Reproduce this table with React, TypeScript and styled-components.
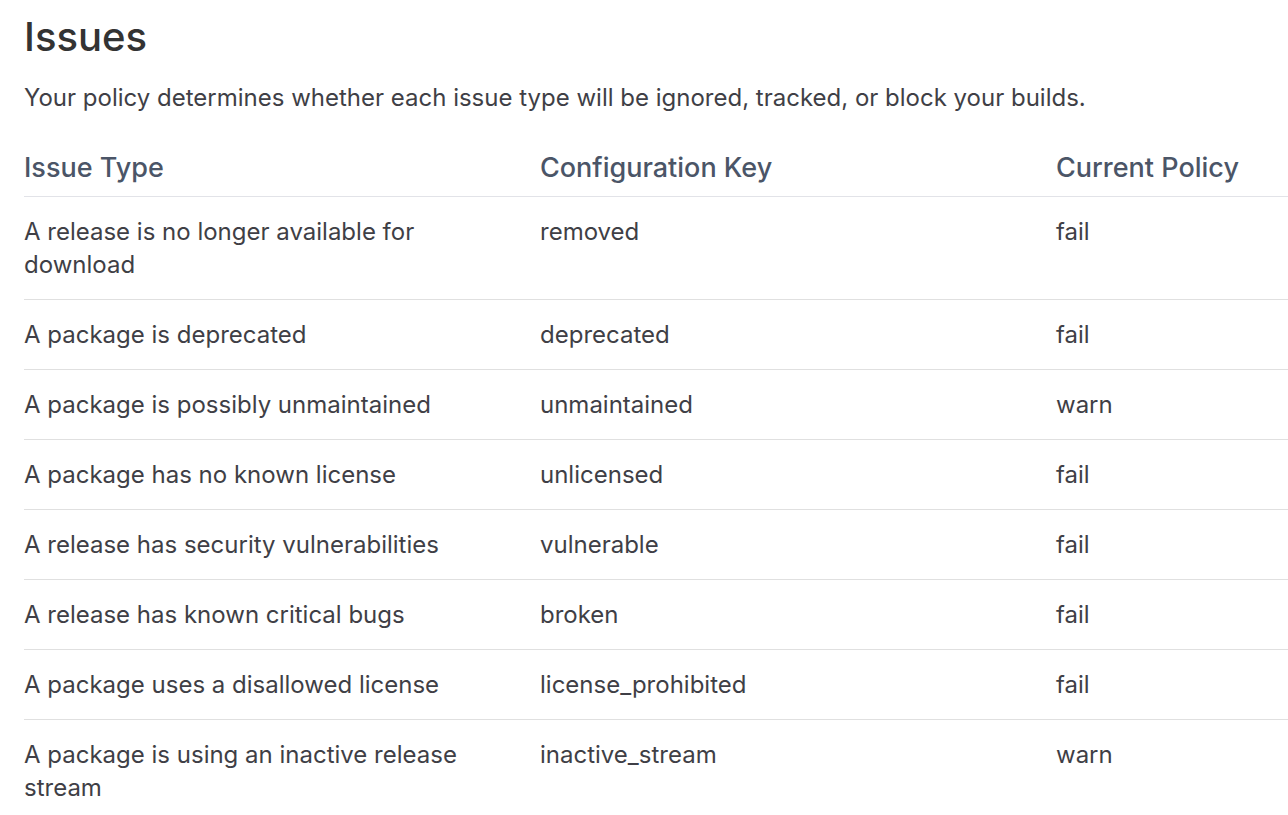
import React from "react";
import styled, { createGlobalStyle } from "styled-components";

const Global = createGlobalStyle`
  html, body { margin: 0; padding: 0; background: #ffffff; overflow: hidden; }
  body { font-family: "Inter", "Noto Sans", sans-serif; color: #3a3a3a; }
`;

const Page = styled.div`
  padding: 0 24px;
  width: 1600px;
`;

const Title = styled.h1`
  margin: 11px 0 0;
  font-size: 40px;
  line-height: 52px;
  font-weight: 500;
  color: #333333;
`;

const Lead = styled.p`
  margin: 18px 0 0;
  font-size: 24px;
  line-height: 33px;
  color: #3f3f46;
`;

const Table = styled.table`
  margin-top: 37px;
  border-collapse: collapse;
  table-layout: fixed;
  width: 1548px;
`;

const Th = styled.th`
  width: 516px;
  text-align: left;
  font-weight: 500;
  font-size: 27px;
  line-height: 33px;
  color: #4b5567;
  padding: 0 0 12px;
  border-bottom: 1px solid #e2e3e8;
`;

const Td = styled.td`
  vertical-align: top;
  font-size: 24px;
  line-height: 33px;
  color: #3f3f46;
  padding: 18px 40px 18px 0;
  border-bottom: 1px solid #e0e0e0;
`;

const rows = [
  ["A release is no longer available for download", "removed", "fail"],
  ["A package is deprecated", "deprecated", "fail"],
  ["A package is possibly unmaintained", "unmaintained", "warn"],
  ["A package has no known license", "unlicensed", "fail"],
  ["A release has security vulnerabilities", "vulnerable", "fail"],
  ["A release has known critical bugs", "broken", "fail"],
  ["A package uses a disallowed license", "license_prohibited", "fail"],
  ["A package is using an inactive release stream", "inactive_stream", "warn"],
];

export default function App() {
  return (
    <Page>
      <Global />
      <Title>Issues</Title>
      <Lead>
        Your policy determines whether each issue type will be ignored, tracked, or block your builds.
      </Lead>
      <Table>
        <thead>
          <tr>
            <Th>Issue Type</Th>
            <Th>Configuration Key</Th>
            <Th>Current Policy</Th>
          </tr>
        </thead>
        <tbody>
          {rows.map((r) => (
            <tr key={r[1]}>
              <Td>{r[0]}</Td>
              <Td>{r[1]}</Td>
              <Td>{r[2]}</Td>
            </tr>
          ))}
        </tbody>
      </Table>
    </Page>
  );
}
